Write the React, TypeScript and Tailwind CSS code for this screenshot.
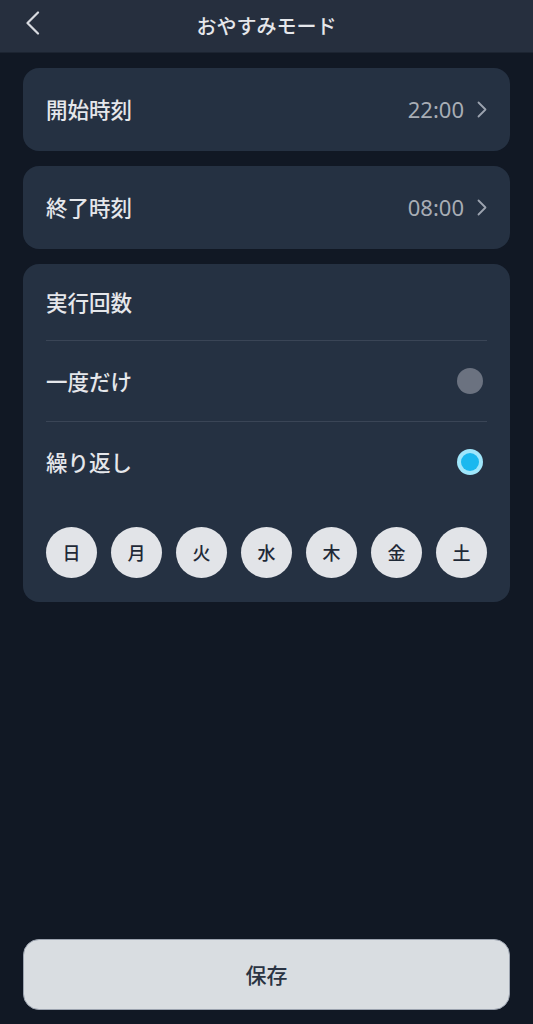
const days = ["日", "月", "火", "水", "木", "金", "土"];

const TimeRow = ({ label, value }: { label: string; value: string }) => (
  <div className="flex h-[83px] items-center justify-between rounded-2xl bg-[#253142] pl-[23px] pr-[23px]">
    <span className="text-[21.5px] font-medium text-[#e5e7eb]">{label}</span>
    <div className="flex items-center gap-[13px]">
      <span className="text-[22px] font-normal text-[#a8adb5] [font-family:'Noto_Sans',sans-serif]">
        {value}
      </span>
      <svg width="10" height="17" viewBox="0 0 10 17" fill="none">
        <path
          d="M1.5 1.5 L8.5 8.5 L1.5 15.5"
          stroke="#9ca3af"
          strokeWidth="1.8"
          strokeLinecap="round"
          strokeLinejoin="round"
        />
      </svg>
    </div>
  </div>
);

const App = () => {
  return (
    <div className="flex min-h-screen flex-col bg-[#111824] [font-family:'Noto_Sans_CJK_JP',sans-serif]">
      <div className="relative flex h-[53px] items-center justify-center border-b border-[#1c2431] bg-[#262f3e]">
        <svg
          width="15"
          height="24"
          viewBox="0 0 15 24"
          fill="none"
          className="absolute left-[25px] top-[11px]"
        >
          <path
            d="M13 1.5 L2.5 12 L13 22.5"
            stroke="#d8dbe0"
            strokeWidth="2.2"
            strokeLinecap="round"
            strokeLinejoin="round"
          />
        </svg>
        <span className="text-[20px] font-medium text-[#e5e7eb]">おやすみモード</span>
      </div>

      <div className="flex flex-col gap-[15px] px-[23px] pt-[15px]">
        <TimeRow label="開始時刻" value="22:00" />
        <TimeRow label="終了時刻" value="08:00" />

        <div className="rounded-2xl bg-[#253142] px-[23px] pb-[24px]">
          <div className="flex h-[77px] items-center border-b border-[#3a4556]">
            <span className="text-[21.5px] font-medium text-[#e5e7eb]">実行回数</span>
          </div>
          <div className="flex h-[81px] items-center justify-between border-b border-[#3a4556]">
            <span className="text-[21.5px] font-medium text-[#e5e7eb]">一度だけ</span>
            <div className="mr-[4px] h-[26px] w-[26px] rounded-full bg-[#6b7280]" />
          </div>
          <div className="flex h-[80px] items-center justify-between">
            <span className="text-[21.5px] font-medium text-[#e5e7eb]">繰り返し</span>
            <div className="mr-[4px] flex h-[26px] w-[26px] items-center justify-center rounded-full bg-[#9fe6fb]">
              <div className="h-[18px] w-[18px] rounded-full bg-[#1ab8ef]" />
            </div>
          </div>
          <div className="mt-[25px] flex justify-between">
            {days.map((d) => (
              <div
                key={d}
                className="flex h-[51px] w-[51px] items-center justify-center rounded-full bg-[#e2e4e8] text-[18px] font-medium text-[#1f2937]"
              >
                {d}
              </div>
            ))}
          </div>
        </div>
      </div>

      <div className="mt-auto px-[23px] pb-[14px]">
        <button className="flex h-[71px] w-full items-center justify-center rounded-2xl border border-[#9ca3af] bg-[#d9dde1] text-[21px] font-medium text-[#2a3342]">
          保存
        </button>
      </div>
    </div>
  );
};

export default App;
